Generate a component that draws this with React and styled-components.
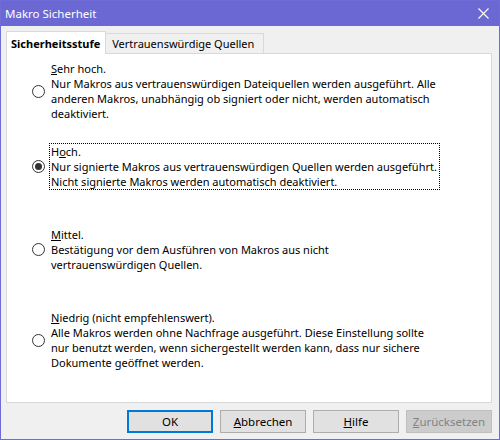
import React, { useState } from 'react'
import styled, { createGlobalStyle, css } from 'styled-components'

const GlobalStyle = createGlobalStyle`
  html, body {
    margin: 0;
    padding: 0;
    background: #f0f0f0;
  }
  body {
    font-family: "Noto Sans", "Liberation Sans", sans-serif;
    font-size: 11px;
    color: #000;
  }
`

const Window = styled.div`
  width: 500px;
  height: 440px;
  box-sizing: border-box;
  border: 1px solid #6f6cd8;
  background: #f0f0f0;
  display: flex;
  flex-direction: column;
`

const TitleBar = styled.div`
  height: 25px;
  flex: none;
  background: #6b68d4;
  color: #fff;
  display: flex;
  align-items: center;
  justify-content: space-between;
  padding: 0 10px 0 4px;

  span {
    font-size: 11.5px;
  }
`

const Body = styled.div`
  flex: 1;
  display: flex;
  flex-direction: column;
  padding: 5px 7px 6px 5px;
`

const TabStrip = styled.div`
  display: flex;
  align-items: flex-end;
  height: 22px;
  position: relative;
  z-index: 1;
`

const Tab = styled.div`
  box-sizing: border-box;
  border: 1px solid #d9d9d9;
  border-bottom: none;
  display: flex;
  align-items: center;
  white-space: nowrap;
  ${p => p.$active ? css`
    height: 23px;
    padding: 0 5px 0 4px;
    background: #fff;
    font-weight: bold;
    margin-bottom: -1px;
  ` : css`
    height: 20px;
    padding: 0 9px 0 6px;
    background: #f0f0f0;
    border-left: none;
  `}
`

const Panel = styled.div`
  box-sizing: border-box;
  height: 350px;
  background: #fff;
  border: 1px solid #d9d9d9;
  padding: 7px 0 0 25px;
  display: grid;
  grid-template-rows: repeat(4, 83px);
`

const Option = styled.label`
  display: flex;
  align-items: center;
  align-self: start;
  gap: 4px;
`

const Radio = styled.span`
  flex: none;
  width: 13px;
  height: 13px;
  box-sizing: border-box;
  border: 1px solid #333;
  border-radius: 50%;
  background: #fff;
  display: flex;
  align-items: center;
  justify-content: center;

  &::after {
    content: '';
    width: 7px;
    height: 7px;
    border-radius: 50%;
    background: #333;
    display: ${p => p.$checked ? 'block' : 'none'};
  }
`

const OptionText = styled.div`
  width: 391px;
  box-sizing: border-box;
  padding-left: 1px;
  line-height: 15px;
  border: 1px dotted ${p => p.$focused ? '#000' : 'transparent'};
  margin: -1px 0;
`

const Line = styled.div`
  white-space: nowrap;
`

const ButtonRow = styled.div`
  display: flex;
  justify-content: flex-end;
  gap: 7px;
  margin-top: 7px;
`

const Button = styled.button`
  width: 86px;
  height: 23px;
  box-sizing: border-box;
  font-family: inherit;
  font-size: 11.5px;
  background: #e1e1e1;
  border: 1px solid #adadad;
  color: #000;
  padding: 0;
  ${p => p.$primary && css`
    border: 2px solid #0078d7;
  `}
  ${p => p.disabled && css`
    background: #cccccc;
    border-color: #bfbfbf;
    color: #838383;
  `}
`

const CloseIcon = () => (
  <svg width="11" height="11" viewBox="0 0 11 11">
    <path d="M0.5 0.5 L10.5 10.5 M10.5 0.5 L0.5 10.5" stroke="#fff" strokeWidth="1.1" />
  </svg>
)

const options = [
  {
    title: <><u>S</u>ehr hoch.</>,
    lines: [
      'Nur Makros aus vertrauenswürdigen Dateiquellen werden ausgeführt. Alle',
      'anderen Makros, unabhängig ob signiert oder nicht, werden automatisch',
      'deaktiviert.',
    ],
  },
  {
    title: <>H<u>o</u>ch.</>,
    lines: [
      'Nur signierte Makros aus vertrauenswürdigen Quellen werden ausgeführt.',
      'Nicht signierte Makros werden automatisch deaktiviert.',
    ],
  },
  {
    title: <><u>M</u>ittel.</>,
    lines: [
      'Bestätigung vor dem Ausführen von Makros aus nicht',
      'vertrauenswürdigen Quellen.',
    ],
  },
  {
    title: <><u>N</u>iedrig (nicht empfehlenswert).</>,
    lines: [
      'Alle Makros werden ohne Nachfrage ausgeführt. Diese Einstellung sollte',
      'nur benutzt werden, wenn sichergestellt werden kann, dass nur sichere',
      'Dokumente geöffnet werden.',
    ],
  },
]

export default function App() {
  const [level, setLevel] = useState(1)

  return (
    <>
      <GlobalStyle />
      <Window>
        <TitleBar>
          <span>Makro Sicherheit</span>
          <CloseIcon />
        </TitleBar>
        <Body>
          <TabStrip>
            <Tab $active>Sicherheitsstufe</Tab>
            <Tab>Vertrauenswürdige Quellen</Tab>
          </TabStrip>
          <Panel>
            {options.map((o, i) => (
              <Option key={i} onClick={() => setLevel(i)}>
                <Radio $checked={level === i} />
                <OptionText $focused={level === i}>
                  <Line>{o.title}</Line>
                  {o.lines.map((l, j) => <Line key={j}>{l}</Line>)}
                </OptionText>
              </Option>
            ))}
          </Panel>
          <ButtonRow>
            <Button $primary>OK</Button>
            <Button><u>A</u>bbrechen</Button>
            <Button><u>H</u>ilfe</Button>
            <Button disabled><u>Z</u>urücksetzen</Button>
          </ButtonRow>
        </Body>
      </Window>
    </>
  )
}
